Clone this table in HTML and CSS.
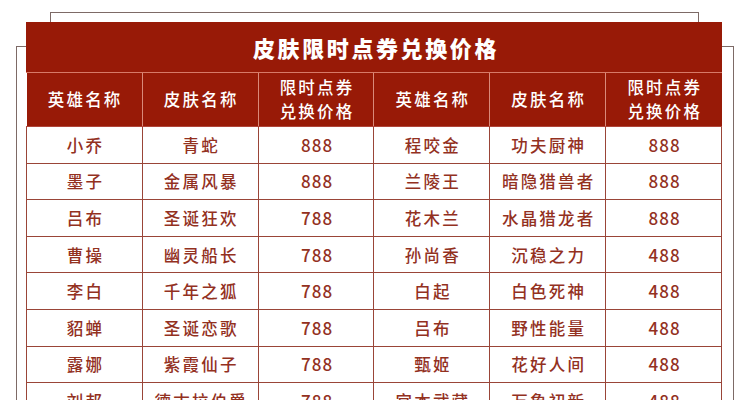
FILE: index.html
```html
<!DOCTYPE html>
<html lang="zh">
<head>
<meta charset="utf-8">
<title>皮肤限时点券兑换价格</title>
<link rel="stylesheet" href="styles.css">
</head>
<body>
<div class="sheet">
  <div class="frame frame-top"></div>
  <div class="frame frame-side"></div>
  <div class="card">
    <div class="title">皮肤限时点券兑换价格</div>
    <table class="price">
      <thead>
        <tr>
          <th>英雄名称</th><th>皮肤名称</th><th>限时点券<br>兑换价格</th>
          <th>英雄名称</th><th>皮肤名称</th><th>限时点券<br>兑换价格</th>
        </tr>
      </thead>
      <tbody>
        <tr><td>小乔</td><td>青蛇</td><td class="num">888</td><td>程咬金</td><td>功夫厨神</td><td class="num">888</td></tr>
        <tr><td>墨子</td><td>金属风暴</td><td class="num">888</td><td>兰陵王</td><td>暗隐猎兽者</td><td class="num">888</td></tr>
        <tr><td>吕布</td><td>圣诞狂欢</td><td class="num">788</td><td>花木兰</td><td>水晶猎龙者</td><td class="num">888</td></tr>
        <tr><td>曹操</td><td>幽灵船长</td><td class="num">788</td><td>孙尚香</td><td>沉稳之力</td><td class="num">488</td></tr>
        <tr><td>李白</td><td>千年之狐</td><td class="num">788</td><td>白起</td><td>白色死神</td><td class="num">488</td></tr>
        <tr><td>貂蝉</td><td>圣诞恋歌</td><td class="num">788</td><td>吕布</td><td>野性能量</td><td class="num">488</td></tr>
        <tr><td>露娜</td><td>紫霞仙子</td><td class="num">788</td><td>甄姬</td><td>花好人间</td><td class="num">488</td></tr>
        <tr><td>刘邦</td><td>德古拉伯爵</td><td class="num">788</td><td>宫本武藏</td><td>万象初新</td><td class="num">488</td></tr>
      </tbody>
    </table>
  </div>
</div>
</body>
</html>
```
FILE: styles.css
```css
html, body {
  margin: 0;
  padding: 0;
  background: #ffffff;
  overflow: hidden;
}
body {
  font-family: "Noto Sans CJK SC", "Noto Sans", sans-serif;
}
.sheet {
  position: relative;
  width: 739px;
  height: 400px;
  padding: 22px 0 0 26px;
  box-sizing: border-box;
}
.frame {
  position: absolute;
  border: 1px solid #7d6a66;
  border-bottom: none;
  z-index: 0;
}
.frame-top {
  left: 50px;
  top: 12px;
  width: 647px;
  height: 400px;
}
.frame-side {
  left: 16px;
  top: 46px;
  width: 716px;
  height: 400px;
}
.card {
  position: relative;
  z-index: 1;
  width: 696px;
  background: #ffffff;
}
.title {
  height: 51px;
  background: #981a07;
  color: #ffffff;
  font-size: 22px;
  font-weight: 900;
  letter-spacing: 2.6px;
  text-align: center;
  line-height: 51px;
  padding-left: 4px;
  box-sizing: border-box;
  border-bottom: 1px solid #d77a68;
}
.price {
  width: 696px;
  border-collapse: collapse;
  table-layout: fixed;
}
.price th {
  background: #981a07;
  color: #ffffff;
  font-weight: 500;
  font-size: 16.5px;
  letter-spacing: 2.2px;
  line-height: 23.5px;
  height: 53px;
  padding: 0 0 0 2px;
  border-left: 1px solid #d98a7a;
  border-bottom: 1px solid #b0463a;
  text-align: center;
  vertical-align: middle;
}
.price th:first-child {
  border-left: none;
}
.price td {
  height: 35.6px;
  padding: 0 0 0 2px;
  border: 1px solid #9a4538;
  color: #93311f;
  font-size: 16.5px;
  font-weight: 500;
  letter-spacing: 2.2px;
  text-align: center;
  vertical-align: middle;
  line-height: 20px;
}
.price td.num {
  font-size: 17px;
  letter-spacing: 1px;
}
```
